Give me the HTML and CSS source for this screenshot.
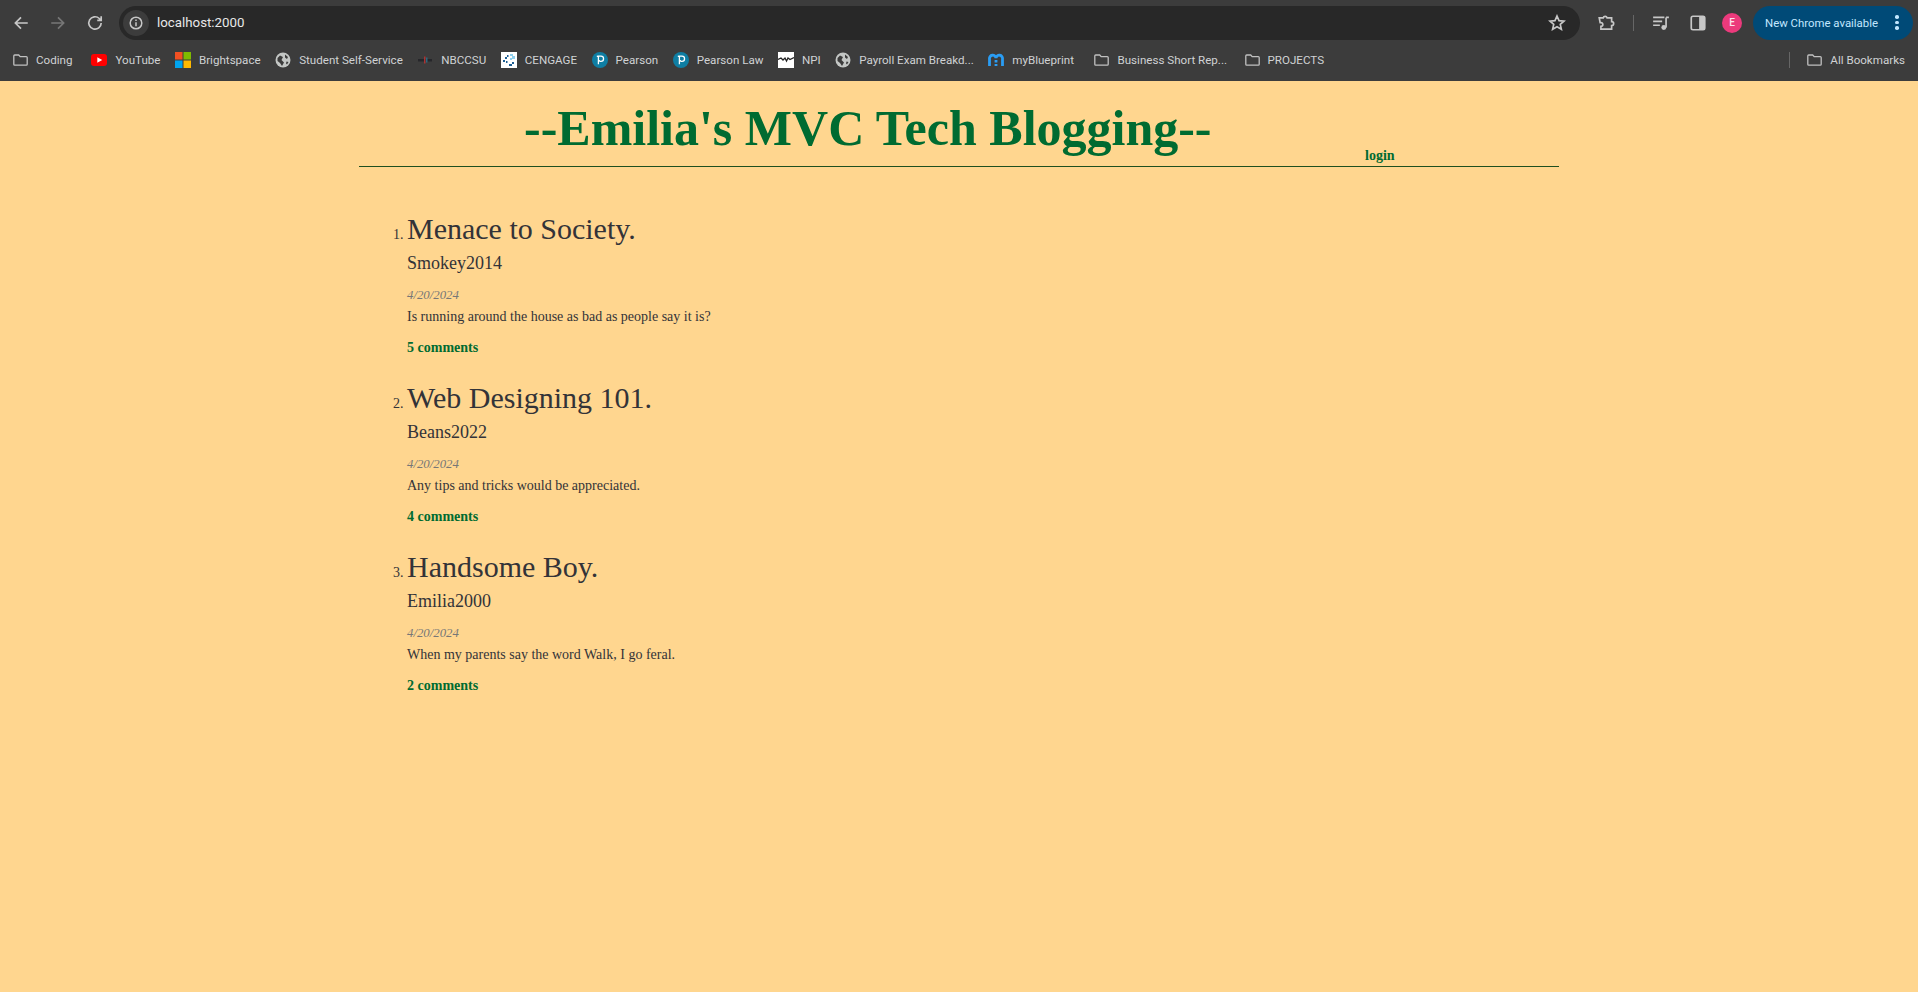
FILE: index.html
```html
<!DOCTYPE html>
<html lang="en">
	<head>
		<meta charset="UTF-8" />
		<meta name="viewport" content="width=device-width, initial-scale=1.0" />
		<title>Emilia's MVC Tech Blogging</title>
		<link rel="stylesheet" href="styles.css">
	</head>
	<body>
		<div class="browser">
			<div class="toolbar">
				<svg class="nav-icon" viewBox="0 0 16 16"><path d="M14 8H3M8 3 3 8l5 5" /></svg>
				<svg class="nav-icon dim" viewBox="0 0 16 16"><path d="M2 8h11M8 3l5 5-5 5" /></svg>
				<svg class="nav-icon" viewBox="0 0 16 16"><path d="M13.5 8A5.5 5.5 0 1 1 11.8 4L13.5 5.6M13.5 2v3.6H10" /></svg>
				<div class="omnibox">
					<span class="site-info">
						<svg viewBox="0 0 16 16"><circle cx="8" cy="8" r="5.8" /><path d="M8 7.2v4M8 4.6v1.4" /></svg>
					</span>
					<span class="url">localhost:2000</span>
					<svg class="star" viewBox="0 0 16 16"><path d="M8 1.800l1.800 4.100 4.400.4-3.300 2.900 1 4.400L8 11.300l-3.900 2.300 1-4.400-3.300-2.900 4.400-.4z" /></svg>
				</div>
				<svg class="tool-icon puzzle" viewBox="0 0 16 16"><path d="M2 3.500h3.500a1.800 1.800 0 0 1 3.500 0H13v3.200a1.800 1.800 0 0 1 0 3.600v3.200H3.500V11a1.700 1.700 0 0 0 0-3.400H2.800z" /></svg>
				<span class="tool-sep"></span>
				<svg class="tool-icon media" viewBox="0 0 16 16"><path d="M1 3h10M1 6.500h8M1 10h6" /><path d="M12.500 3H15M12.500 3v9" /><circle class="solid" cx="10.500" cy="12" r="2.200" /></svg>
				<svg class="tool-icon panel" viewBox="0 0 16 16"><rect x="2" y="2" width="12" height="12" rx="1.500" /><rect class="solid" x="9" y="2" width="5" height="12" /></svg>
				<span class="avatar">E</span>
				<div class="update-pill">
					<span>New Chrome available</span>
					<span class="dots"><i></i><i></i><i></i></span>
				</div>
			</div>
			<div class="bookmarks">
				<a class="mark"><svg class="folder" viewBox="0 0 16 16"><path d="M2.700 3h4l1.500 1.700h6.100q.9 0 .9.9v6.600q0 .9-.9.9H2.700q-.9 0-.9-.9V3.900q0-.9.9-.9z" /></svg>Coding</a>
				<a class="mark"><svg viewBox="0 0 16 16"><rect y="2" width="16" height="12" rx="3" fill="#f00" /><path d="M6.300 5.200v5.600L11.200 8z" fill="#fff" /></svg>YouTube</a>
				<a class="mark"><svg viewBox="0 0 16 16"><rect width="7.500" height="7.500" fill="#f25022" /><rect x="8.500" width="7.500" height="7.500" fill="#7fba00" /><rect y="8.500" width="7.500" height="7.500" fill="#00a4ef" /><rect x="8.500" y="8.500" width="7.500" height="7.500" fill="#ffb900" /></svg>Brightspace</a>
				<a class="mark"><svg class="globe" viewBox="0 0 16 16"><circle cx="8" cy="8" r="7.500" fill="#c4c7c5" /><path d="M2.500 6 5 3.500 8 5 6.500 8 9 10.500 7 14 5 11 2.500 9zM10 2.500l3 2.500-1 2-2-1.500zM11.500 9.500l2 .5-1.500 2.500-1-1z" fill="#3c3c3c" /></svg>Student Self-Service</a>
				<a class="mark"><svg viewBox="0 0 16 16"><rect x="1" y="7" width="14" height="2.500" fill="#26262a" /><rect x="7" y="4.500" width="1.500" height="7" fill="#a33" /><rect x="9" y="5.500" width="1.500" height="5" fill="#2a6a80" /></svg>NBCCSU</a>
				<a class="mark"><svg viewBox="0 0 16 16"><rect width="16" height="16" fill="#fff" /><path d="M2 8h2v2H2zM4 5h2v2H4zM6 3h1.500v2H6zM5 9h1.500v2H5zM8 12h3v2H8zM11 10h2v2h-2z" fill="#1d5f94" /><path d="M9 2h3v2H9zM11 4h3v3h-3zM9 6h2v2H9z" fill="#8fd0ee" /></svg>CENGAGE</a>
				<a class="mark"><svg viewBox="0 0 16 16"><circle cx="8" cy="8" r="8" fill="#0f7ea3" /><path d="M4.800 4.300 6 4.200h3a2.500 2.500 0 0 1 0 5.100c-1.300 0-1.900-.6-1.900-1.400M6.400 4.300v8" fill="none" stroke="#fff" stroke-width="1.300" /></svg>Pearson</a>
				<a class="mark"><svg viewBox="0 0 16 16"><circle cx="8" cy="8" r="8" fill="#0f7ea3" /><path d="M4.800 4.300 6 4.200h3a2.500 2.500 0 0 1 0 5.100c-1.300 0-1.900-.6-1.900-1.400M6.400 4.300v8" fill="none" stroke="#fff" stroke-width="1.300" /></svg>Pearson Law</a>
				<a class="mark"><svg viewBox="0 0 16 16"><rect width="16" height="16" fill="#fff" /><path d="M0 7.500 3 6l2 2 2-2 1.500 3L10 6l2 1.500L16 5.500" fill="none" stroke="#222" stroke-width="1.300" /></svg>NPI</a>
				<a class="mark"><svg class="globe" viewBox="0 0 16 16"><circle cx="8" cy="8" r="7.500" fill="#c4c7c5" /><path d="M2.500 6 5 3.500 8 5 6.500 8 9 10.500 7 14 5 11 2.500 9zM10 2.500l3 2.500-1 2-2-1.500zM11.500 9.500l2 .5-1.500 2.500-1-1z" fill="#3c3c3c" /></svg>Payroll Exam Breakd...</a>
				<a class="mark"><svg viewBox="0 0 16 16"><path d="M1.500 14V7a3.200 3.200 0 0 1 6.500-1 3.200 3.200 0 0 1 6.500 1v7" fill="none" stroke="#2a9df4" stroke-width="2.800" /><path d="M8 8v2.500M8 12v2" stroke="#2a9df4" stroke-width="2.800" /></svg>myBlueprint</a>
				<a class="mark"><svg class="folder" viewBox="0 0 16 16"><path d="M2.700 3h4l1.500 1.700h6.100q.9 0 .9.9v6.600q0 .9-.9.9H2.700q-.9 0-.9-.9V3.900q0-.9.9-.9z" /></svg>Business Short Rep...</a>
				<a class="mark"><svg class="folder" viewBox="0 0 16 16"><path d="M2.700 3h4l1.500 1.700h6.100q.9 0 .9.9v6.600q0 .9-.9.9H2.700q-.9 0-.9-.9V3.900q0-.9.9-.9z" /></svg>PROJECTS</a>
				<span class="mark-sep"></span>
				<a class="mark all"><svg class="folder" viewBox="0 0 16 16"><path d="M2.700 3h4l1.500 1.700h6.100q.9 0 .9.9v6.600q0 .9-.9.9H2.700q-.9 0-.9-.9V3.900q0-.9.9-.9z" /></svg>All Bookmarks</a>
			</div>
		</div>

		<div class="wrapper">
			<header class="site-head">
				<h1>--Emilia's MVC Tech Blogging--</h1>
				<a class="login">login</a>
			</header>
			<ol class="posts">
				<li>
					<h2>Menace to Society.</h2>
					<h3>Smokey2014</h3>
					<p class="date">4/20/2024</p>
					<p class="body-text">Is running around the house as bad as people say it is?</p>
					<a class="comments">5 comments</a>
				</li>
				<li>
					<h2>Web Designing 101.</h2>
					<h3>Beans2022</h3>
					<p class="date">4/20/2024</p>
					<p class="body-text">Any tips and tricks would be appreciated.</p>
					<a class="comments">4 comments</a>
				</li>
				<li>
					<h2>Handsome Boy.</h2>
					<h3>Emilia2000</h3>
					<p class="date">4/20/2024</p>
					<p class="body-text">When my parents say the word Walk, I go feral.</p>
					<a class="comments">2 comments</a>
				</li>
			</ol>
		</div>
	</body>
</html>
```

FILE: styles.css
```css
body {
	margin: 0;
	min-height: 992px;
	background-color: #ffd68f;
	color: #333338;
	font-family: "Liberation Serif", serif;
	overflow: hidden;
}

/* browser chrome */
.browser {
	height: 81px;
	background-color: #3c3c3c;
	font-family: Roboto, "Open Sans", sans-serif;
	color: #e3e3e3;
}

.toolbar {
	display: flex;
	align-items: center;
	height: 41px;
	padding: 4px 5px 0 12px;
	box-sizing: border-box;
}

.toolbar svg {
	fill: none;
	stroke: #c7c7c7;
	stroke-width: 1.500;
	flex: none;
}

.nav-icon {
	width: 18px;
	height: 18px;
	margin-right: 19px;
}

.nav-icon.dim {
	stroke: #777;
}

.nav-icon:nth-child(3) {
	margin-right: 15px;
}

.omnibox {
	display: flex;
	align-items: center;
	flex: none;
	width: 1461px;
	height: 34px;
	padding: 0 14px 0 4px;
	box-sizing: border-box;
	border-radius: 17px;
	background-color: #282828;
	font-size: 13.300px;
}

.site-info {
	display: flex;
	align-items: center;
	justify-content: center;
	width: 26px;
	height: 26px;
	border-radius: 50%;
	background-color: #3c3c3c;
	margin-right: 8px;
}

.site-info svg {
	width: 16px;
	height: 16px;
}

.url {
	flex: 1;
	color: #e8e8e8;
}

.toolbar .star {
	width: 18px;
	height: 18px;
}

.tool-icon {
	width: 18px;
	height: 18px;
}

.puzzle {
	margin-left: 17px;
}

.tool-sep {
	width: 1px;
	height: 16px;
	margin: 0 18px;
	background-color: #666;
}

.toolbar .solid {
	fill: #c7c7c7;
	stroke: none;
}

.panel {
	margin-left: 19px;
}

.avatar {
	display: flex;
	align-items: center;
	justify-content: center;
	width: 20px;
	height: 20px;
	margin-left: 15px;
	border-radius: 50%;
	background-color: #ec3a7c;
	color: #fbe3ec;
	font-size: 10px;
	font-weight: 500;
}

.update-pill {
	display: flex;
	align-items: center;
	justify-content: space-between;
	width: 160px;
	height: 34px;
	margin-left: 11px;
	padding: 0 11px 0 12px;
	box-sizing: border-box;
	border-radius: 17px;
	background-color: #004a77;
	color: #c2e7ff;
	font-size: 11.400px;
	white-space: nowrap;
}

.dots {
	display: flex;
	flex-direction: column;
	gap: 2px;
	width: 10px;
	align-items: center;
}

.dots i {
	width: 3.500px;
	height: 3.500px;
	border-radius: 50%;
	background-color: #c2e7ff;
}

.bookmarks {
	display: flex;
	align-items: center;
	height: 38px;
	padding-left: 12px;
	font-size: 11.600px;
	color: #d0d2d4;
}

.mark {
	display: flex;
	align-items: center;
	gap: 8px;
	margin-right: 14.500px;
	white-space: nowrap;
}

.mark:first-child {
	margin-right: 19px;
}

.mark:nth-child(11) {
	margin-right: 19.500px;
}

.mark:nth-child(12) {
	margin-right: 16.500px;
}

.mark svg {
	width: 16px;
	height: 16px;
	flex: none;
}

.folder path {
	fill: none;
	stroke: #c0c0c0;
	stroke-width: 1.300;
}

.mark-sep {
	width: 1px;
	height: 16px;
	margin-left: auto;
	margin-right: 16px;
	background-color: #666;
}

.mark.all {
	margin-right: 13px;
}

/* page */
.wrapper {
	width: 1200px;
	margin: 0 auto;
}

.site-head {
	position: relative;
	height: 85px;
	border-bottom: 1px solid #1f4f1f;
}

h1 {
	margin: 0;
	padding: 18px 0 0 165px;
	font-size: 50px;
	line-height: 59px;
	color: #006b31;
}

.login {
	position: absolute;
	left: 1006px;
	bottom: 2px;
	font-size: 14px;
	font-weight: bold;
	color: #006b31;
}

.posts {
	margin: 0;
	padding: 44px 0 0 48px;
	font-size: 14px;
}

.posts li {
	margin-bottom: 24px;
}

.posts h2 {
	margin: 0;
	font-size: 30px;
	line-height: 35px;
	font-weight: normal;
}

.posts h3 {
	margin: 7px 0 0;
	font-size: 18px;
	line-height: 21px;
	font-weight: normal;
}

.date {
	margin: 14px 0 0;
	font-size: 12.800px;
	line-height: 15px;
	font-style: italic;
	color: #777;
}

.body-text {
	margin: 6px 0 0;
	line-height: 16px;
}

.comments {
	display: block;
	margin-top: 15px;
	line-height: 16px;
	font-weight: bold;
	color: #006b31;
}
```
